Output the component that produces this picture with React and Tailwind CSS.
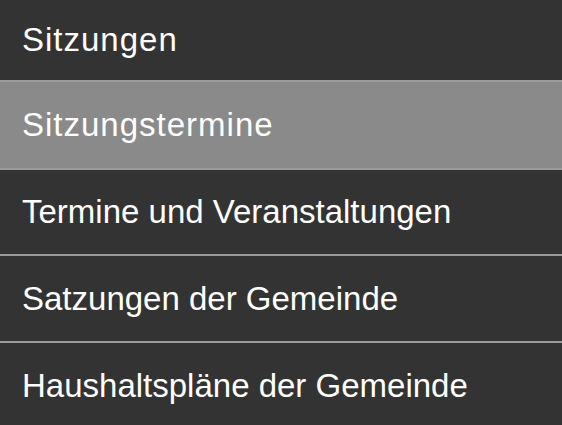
const ITEMS = [
  { label: 'Sitzungen', h: 'h-[82px]', wide: true },
  { label: 'Sitzungstermine', h: 'h-[88px]', wide: true, active: true },
  { label: 'Termine und Veranstaltungen', h: 'h-[86px]' },
  { label: 'Satzungen der Gemeinde', h: 'h-[87px]' },
  { label: 'Haushaltspläne der Gemeinde', h: 'h-[87px]' },
];

export default function App() {
  return (
    <div className="w-[562px] h-[425px] overflow-hidden bg-[#333333] font-['Liberation_Sans',Arial,sans-serif]">
      <ul className="flex flex-col">
        {ITEMS.map(({ label, h, wide, active }) => (
          <li
            key={label}
            className={`${h} shrink-0 flex items-center pl-[22px] text-[33px] text-white border-b-2 border-[#9b9b9b] ${
              wide ? 'tracking-[1px]' : ''
            } ${active ? 'bg-[#8a8a8a]' : 'bg-[#333333]'}`}
          >
            {label}
          </li>
        ))}
      </ul>
    </div>
  );
}
